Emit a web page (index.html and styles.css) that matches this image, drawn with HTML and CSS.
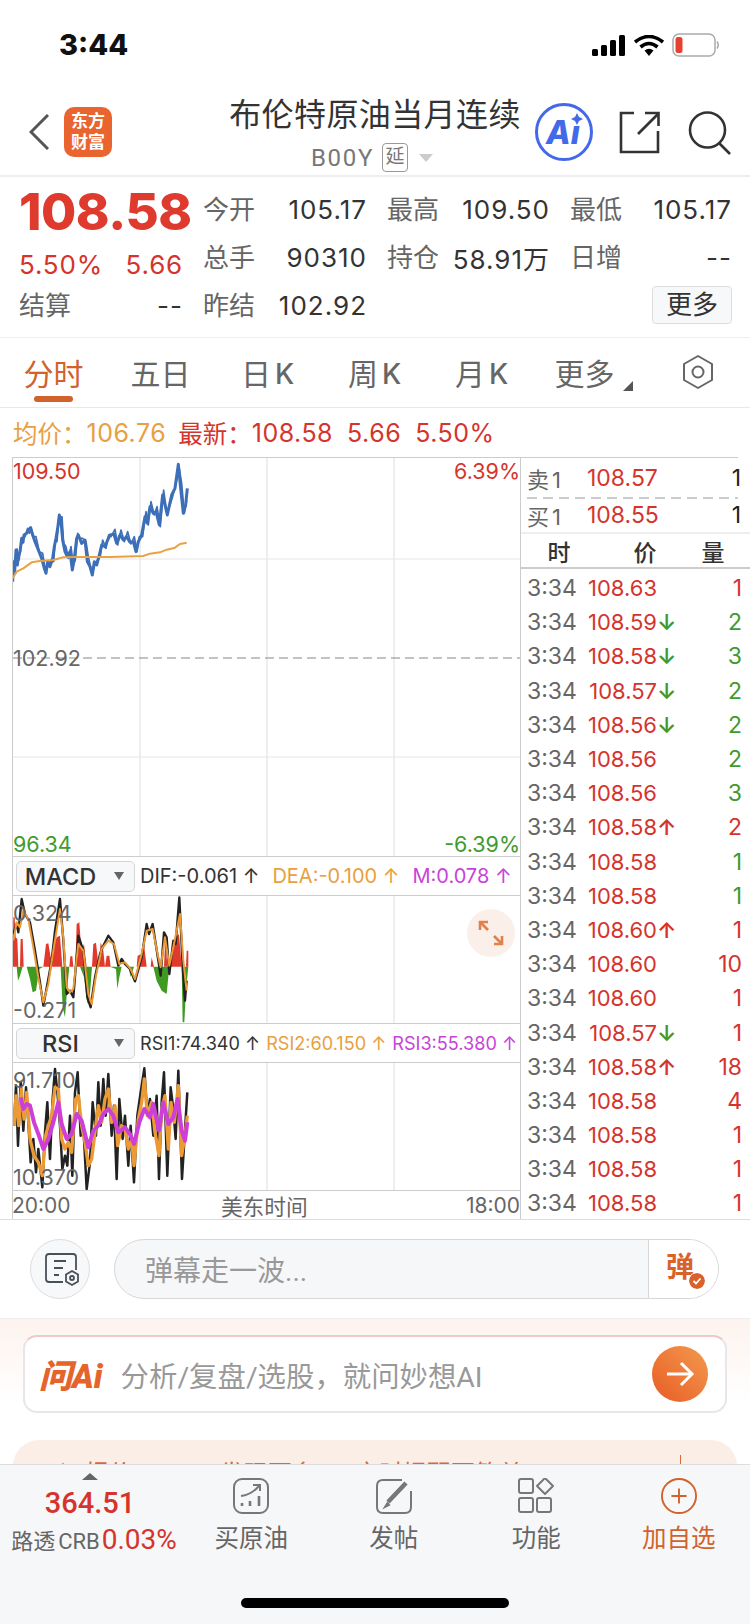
FILE: index.html
```html
<!DOCTYPE html>
<html lang="zh-CN">
<head>
    <meta charset="UTF-8">
    <meta name="viewport" content="width=device-width, initial-scale=1.0">
    <title>布伦特原油当月连续</title>
    <link rel="stylesheet" href="styles.css">
</head>
<body>
<div class="page">

    <!-- Status bar -->
    <div class="status-bar">
        <span class="clock">3:44</span>
        <div class="status-icons">
            <svg width="34" height="21" viewBox="0 0 34 21"><rect x="0" y="14" width="6" height="7" rx="1.5"/><rect x="9" y="10" width="6" height="11" rx="1.5"/><rect x="18" y="5" width="6" height="16" rx="1.5"/><rect x="27" y="0" width="6" height="21" rx="1.5"/></svg>
            <svg width="30" height="21" viewBox="0 0 30 21"><path d="M1 7 Q15 -4 29 7" fill="none" stroke="#000" stroke-width="3.6"/><path d="M6.5 12 Q15 5 23.5 12" fill="none" stroke="#000" stroke-width="3.6"/><path d="M10.5 15.5 Q15 12 19.5 15.5 L15 21 Z"/></svg>
            <svg width="48" height="24" viewBox="0 0 48 24"><rect x="1" y="1" width="42" height="22" rx="6" fill="none" stroke="#aaa" stroke-width="1.5"/><rect x="3.5" y="4" width="7" height="16" rx="2.5" fill="#e8402f"/><path d="M45 8.5 Q47.5 12 45 15.5" fill="none" stroke="#aaa" stroke-width="1.5"/></svg>
        </div>
    </div>

    <!-- Header -->
    <div class="header">
        <div class="header-left">
            <svg width="20" height="36" viewBox="0 0 20 36"><polyline points="19,1 2,18 19,35" fill="none" stroke="#555" stroke-width="3"/></svg>
            <div class="logo">东方<br>财富</div>
        </div>
        <div class="header-title">
            <div class="title">布伦特原油当月连续</div>
            <div class="subtitle">
                <span class="code">B00Y</span>
                <span class="delay-tag">延</span>
                <span class="caret-light"></span>
            </div>
        </div>
        <div class="header-right">
            <svg width="60" height="60" viewBox="0 0 60 60">
                <circle cx="30" cy="30" r="27.5" fill="none" stroke="#4169e8" stroke-width="3"/>
                <text x="12" y="42" class="ai-text">Ai</text>
                <circle cx="43" cy="17" r="7" fill="#fff"/>
                <path d="M43 11 L45 15 L49 17 L45 19 L43 23 L41 19 L37 17 L41 15 Z" fill="#4169e8"/>
            </svg>
            <svg width="42" height="44" viewBox="0 0 42 44" fill="none" stroke="#333" stroke-width="2.6"><path d="M15 3 H2 V42 H39 V21"/><path d="M19 24 L39 4"/><path d="M26 3 H39.5 V16"/></svg>
            <svg class="search-icon" width="44" height="46" viewBox="0 0 44 46" fill="none" stroke="#333" stroke-width="2.6"><circle cx="19.5" cy="21" r="17.5"/><path d="M31 34 L42 45"/></svg>
        </div>
    </div>

    <!-- Quote -->
    <div class="quote">
        <div class="quote-left">
            <div class="big-price">108.58</div>
            <div class="quote-change"><span>5.50%</span><span>5.66</span></div>
            <div class="quote-cell"><span class="label">结算</span><span class="val">--</span></div>
        </div>
        <div class="quote-grid">
            <div class="quote-cell"><span class="label">今开</span><span class="val red">105.17</span></div>
            <div class="quote-cell"><span class="label">最高</span><span class="val red">109.50</span></div>
            <div class="quote-cell"><span class="label">最低</span><span class="val red">105.17</span></div>
            <div class="quote-cell"><span class="label">总手</span><span class="val">90310</span></div>
            <div class="quote-cell"><span class="label">持仓</span><span class="val">58.91万</span></div>
            <div class="quote-cell"><span class="label">日增</span><span class="val">--</span></div>
            <div class="quote-cell"><span class="label">昨结</span><span class="val">102.92</span></div>
            <div></div>
            <div class="quote-more"><button class="more-btn">更多</button></div>
        </div>
    </div>

    <!-- Tabs -->
    <div class="tabs">
        <div class="tab active">分时</div>
        <div class="tab">五日</div>
        <div class="tab">日<em>K</em></div>
        <div class="tab">周<em>K</em></div>
        <div class="tab">月<em>K</em></div>
        <div class="tab tab-more">更多<i></i></div>
        <div class="tab tab-gear">
            <svg width="36" height="36" viewBox="0 0 36 36" fill="none" stroke="#666" stroke-width="2"><path d="M18 2 L32 10 V26 L18 34 L4 26 V10 Z" stroke-linejoin="round"/><circle cx="18" cy="18" r="5.5"/></svg>
        </div>
    </div>

    <!-- Average line -->
    <div class="avg-line">
        <span class="orange">均价：</span><span class="orange avg-val avg-num">106.76</span>
        <span class="red">最新：</span><span class="red avg-val">108.58</span>
        <span class="red avg-val avg-gap">5.66</span><span class="red avg-val avg-gap">5.50%</span>
    </div>

    <div class="chart-area">
        <div class="chart-col">

            <div class="pane pane-main">
                <svg width="507" height="400" viewBox="0 0 507 400">
                    <g class="grid-v"><line x1="127" y1="0" x2="127" y2="400"/><line x1="254" y1="0" x2="254" y2="400"/><line x1="381" y1="0" x2="381" y2="400"/></g>
                    <g class="grid-h"><line x1="0" y1="101" x2="507" y2="101"/><line x1="0" y1="299" x2="507" y2="299"/></g>
                    <line x1="0" y1="200" x2="507" y2="200" stroke="#888" stroke-width="1.2" stroke-dasharray="9 5"/>
                    <g transform="translate(-3,-3) scale(.3333)" fill="none" stroke-linejoin="round">
                        <polyline stroke="#3d6fb8" stroke-width="9" points="8,380 10,320 14,350 18,285 22,330 26,300 30,290 35,250 39,262 42,240 50,235 55,225 62,218 68,240 75,260 85,285 95,310 103,340 108,355 113,320 120,335 128,310 133,275 138,250 143,220 148,180 153,200 158,255 165,290 172,305 180,290 187,345 193,310 200,250 205,240 215,265 225,255 232,320 240,335 247,360 253,320 260,330 268,300 275,270 285,275 293,255 300,240 312,238 320,265 330,240 340,255 350,245 360,262 370,260 378,290 385,260 395,240 405,185 412,205 420,155 430,175 438,170 448,210 458,120 465,150 472,180 485,120 495,100 505,28 512,100 520,175 527,150 532,100"/>
                        <polyline stroke="#3d6fb8" stroke-width="5" transform="translate(3,-5)" points="18,285 24,320 30,280 35,255 42,250 50,225 55,240 62,230 68,250 75,250 85,295 95,300 103,350 108,345 113,335 120,320 128,325 133,260 138,265 143,205 148,200 153,190 158,270 165,280 172,315 180,280 187,335 193,320 200,240 205,255 215,255 225,265 232,310 240,345 247,350 253,330 260,320 268,310 275,260 285,285 293,245 300,250 312,228 320,275 330,230 340,265 350,235 360,272 370,250 378,295 385,250 395,250 405,175 412,215 420,145 430,185 438,160 448,220 458,110 465,160 472,170 485,130 495,90 505,45 512,90 520,180 527,140"/>
                        <polyline stroke="#e9a23f" stroke-width="6" points="8,370 20,350 40,340 65,322 90,318 130,315 160,307 200,306 300,306 400,303 420,296 450,292 470,284 495,278 510,267 530,263"/>
                    </g>
                </svg>
                <span class="axis red axis-tl">109.50</span>
                <span class="axis red axis-tr">6.39%</span>
                <span class="axis grey axis-ml">102.92</span>
                <span class="axis green axis-bl">96.34</span>
                <span class="axis green axis-br">-6.39%</span>
            </div>

            <div class="ind-row">
                <div class="ind-select">MACD<i></i></div>
                <div class="legend legend-macd">
                    <span class="dark">DIF:-0.061 ↑</span>
                    <span class="orange">DEA:-0.100 ↑</span>
                    <span class="purple">M:0.078 ↑</span>
                </div>
            </div>

            <div class="pane pane-sub">
                <svg width="507" height="127" viewBox="0 0 507 127">
                    <g class="grid-v"><line x1="127" y1="0" x2="127" y2="127"/><line x1="254" y1="0" x2="254" y2="127"/><line x1="381" y1="0" x2="381" y2="127"/></g>
                    <g transform="translate(-3,-2) scale(.3333)" stroke-linejoin="round">
                        <polygon fill="#e2392d" points="8,218 10,70 14,70 17,130 22,135 25,218 30,218 32,135 38,135 41,218 100,218 108,150 115,148 122,190 130,160 140,130 150,125 157,218 178,218 181,187 187,187 190,218 196,218 200,90 208,85 214,170 222,150 230,218 246,218 250,150 258,146 266,218 272,145 280,170 285,218 290,185 298,185 302,218 380,218 383,185 395,180 402,150 410,218 422,218 425,190 432,218 462,218 466,130 472,218 482,218 488,170 498,130 507,120 515,218 528,218 530,170 535,170 535,218"/>
                        <polygon fill="#3f9a22" points="20,218 24,260 30,245 38,218 50,218 60,255 68,295 78,290 88,225 100,218 152,218 158,340 165,370 172,280 178,218 210,218 222,250 232,330 240,300 246,218 300,218 318,225 322,285 328,250 335,218 355,218 362,248 372,218 430,218 440,260 455,290 470,300 478,218 515,218 518,385 523,385 528,290 535,218"/>
                        <polyline fill="none" stroke="#222" stroke-width="7" points="10,120 20,90 25,115 35,15 45,60 60,85 75,170 90,265 100,335 115,255 125,200 135,110 150,15 160,140 170,300 180,290 190,310 205,125 220,170 232,310 242,340 255,250 270,180 280,155 295,125 310,145 325,215 335,195 345,210 360,225 375,262 395,190 410,90 417,120 428,90 445,200 452,245 462,115 470,130 478,240 490,140 497,150 508,10 518,215 525,320 530,260"/>
                        <polyline fill="none" stroke="#ec9a35" stroke-width="6" points="10,140 20,85 30,100 40,50 55,75 70,160 85,250 100,325 115,270 130,170 150,45 160,130 170,280 180,295 190,285 205,150 220,170 235,300 245,330 258,245 275,165 295,140 312,150 328,210 345,205 362,225 375,255 395,180 410,110 428,105 445,190 452,220 465,130 478,215 492,150 510,60 520,200 530,290"/>
                    </g>
                </svg>
                <span class="axis grey axis-tl">0.324</span>
                <span class="axis grey axis-bl-sub">-0.271</span>
                <div class="expand-btn">
                    <svg width="28" height="28" viewBox="0 0 28 28" fill="none" stroke="#e2804a" stroke-width="2.6"><path d="M3 11 V3 H11"/><path d="M3 3 L11 11"/><path d="M25 17 V25 H17"/><path d="M25 25 L17 17"/></svg>
                </div>
            </div>

            <div class="ind-row">
                <div class="ind-select">RSI<i></i></div>
                <div class="legend legend-rsi">
                    <span class="dark">RSI1:74.340 ↑</span>
                    <span class="orange">RSI2:60.150 ↑</span>
                    <span class="purple">RSI3:55.380 ↑</span>
                </div>
            </div>

            <div class="pane pane-sub">
                <svg width="507" height="127" viewBox="0 0 507 127">
                    <g class="grid-v"><line x1="127" y1="0" x2="127" y2="127"/><line x1="254" y1="0" x2="254" y2="127"/><line x1="381" y1="0" x2="381" y2="127"/></g>
                    <g transform="translate(-3,-4) scale(.3333)" fill="none" stroke-linejoin="round">
                        <polyline stroke="#222" stroke-width="7.5" points="12,200 18,80 24,260 32,70 40,215 48,85 55,190 62,310 70,240 78,340 85,270 97,385 105,220 112,130 120,300 128,120 135,30 143,110 150,200 157,330 165,290 172,320 180,170 187,350 195,100 203,40 212,230 220,200 230,390 240,310 248,130 258,230 265,70 272,200 280,60 287,170 295,45 305,230 312,140 320,360 328,120 338,240 345,170 355,320 362,200 372,370 382,170 392,100 403,28 412,170 420,120 430,230 440,110 447,360 455,130 462,40 472,350 482,85 490,150 497,240 505,35 516,360 524,230 532,100"/>
                        <polyline stroke="#ec9a35" stroke-width="10" points="12,200 18,110 26,200 34,90 42,180 50,100 60,240 72,290 85,310 97,350 107,230 115,200 125,170 135,85 145,90 155,240 165,270 175,250 185,280 197,120 205,110 215,200 225,250 235,320 245,300 255,220 265,140 275,190 285,120 295,90 305,190 315,140 323,260 335,200 345,210 355,270 365,240 372,320 385,180 395,130 403,60 412,170 425,130 435,220 447,290 455,150 465,110 475,270 483,130 493,190 505,80 515,290 525,230 532,170"/>
                        <polyline stroke="#cc3fd8" stroke-width="12" points="32,115 40,150 50,135 60,140 72,190 85,225 100,270 115,240 130,190 145,130 155,195 170,240 185,225 200,165 215,185 235,265 250,215 265,200 280,165 295,150 310,170 325,220 345,205 360,225 372,255 388,190 403,150 420,175 430,135 447,215 460,130 475,195 490,175 503,120 515,215 525,245 532,190"/>
                    </g>
                </svg>
                <span class="axis grey axis-tl">91.710</span>
                <span class="axis grey axis-bl-sub">10.370</span>
            </div>

            <div class="time-row">
                <span>20:00</span><span class="time-zone">美东时间</span><span>18:00</span>
            </div>
        </div>

        <!-- Order book and ticks -->
        <div class="book">
            <div class="book-top">
                <div class="book-row book-sell"><span class="book-label">卖<em>1</em></span><span class="red">108.57</span><span class="book-qty">1</span></div>
                <div class="book-row book-buy"><span class="book-label">买<em>1</em></span><span class="red">108.55</span><span class="book-qty">1</span></div>
            </div>
            <div class="book-head"><span>时</span><span>价</span><span>量</span></div>
            <div class="ticks">
                <div class="tick"><span>3:34</span><span class="red">108.63</span><span></span><span class="red">1</span></div>
                <div class="tick"><span>3:34</span><span class="red">108.59</span><span class="green">↓</span><span class="green">2</span></div>
                <div class="tick"><span>3:34</span><span class="red">108.58</span><span class="green">↓</span><span class="green">3</span></div>
                <div class="tick"><span>3:34</span><span class="red">108.57</span><span class="green">↓</span><span class="green">2</span></div>
                <div class="tick"><span>3:34</span><span class="red">108.56</span><span class="green">↓</span><span class="green">2</span></div>
                <div class="tick"><span>3:34</span><span class="red">108.56</span><span></span><span class="green">2</span></div>
                <div class="tick"><span>3:34</span><span class="red">108.56</span><span></span><span class="green">3</span></div>
                <div class="tick"><span>3:34</span><span class="red">108.58</span><span class="red">↑</span><span class="red">2</span></div>
                <div class="tick"><span>3:34</span><span class="red">108.58</span><span></span><span class="green">1</span></div>
                <div class="tick"><span>3:34</span><span class="red">108.58</span><span></span><span class="green">1</span></div>
                <div class="tick"><span>3:34</span><span class="red">108.60</span><span class="red">↑</span><span class="red">1</span></div>
                <div class="tick"><span>3:34</span><span class="red">108.60</span><span></span><span class="red">10</span></div>
                <div class="tick"><span>3:34</span><span class="red">108.60</span><span></span><span class="red">1</span></div>
                <div class="tick"><span>3:34</span><span class="red">108.57</span><span class="green">↓</span><span class="red">1</span></div>
                <div class="tick"><span>3:34</span><span class="red">108.58</span><span class="red">↑</span><span class="red">18</span></div>
                <div class="tick"><span>3:34</span><span class="red">108.58</span><span></span><span class="red">4</span></div>
                <div class="tick"><span>3:34</span><span class="red">108.58</span><span></span><span class="red">1</span></div>
                <div class="tick"><span>3:34</span><span class="red">108.58</span><span></span><span class="red">1</span></div>
                <div class="tick"><span>3:34</span><span class="red">108.58</span><span></span><span class="red">1</span></div>
            </div>
        </div>
    </div>

    <!-- Danmu input -->
    <div class="danmu">
        <div class="danmu-btn">
            <svg width="36" height="36" viewBox="0 0 36 36" fill="none" stroke="#4a5058" stroke-width="1.8"><path d="M19 30 H5 Q2 30 2 27 V5 Q2 2 5 2 H29 Q32 2 32 5 V18"/><path d="M10 9 H22 M10 16 H19 M10 23 H15"/><path d="M28 19 L34 22.5 V29.5 L28 33 L22 29.5 V22.5 Z"/><circle cx="28" cy="26" r="2"/></svg>
        </div>
        <div class="danmu-input">
            <span class="danmu-text">弹幕走一波...</span>
            <span class="danmu-send">弹<svg class="danmu-check" width="16" height="16" viewBox="0 0 16 16"><circle cx="8" cy="8" r="8" fill="#d9622c"/><path d="M4.5 8 L7 10.5 L11.5 5.5" fill="none" stroke="#fff" stroke-width="1.8"/></svg></span>
        </div>
    </div>

    <div class="scroll">
        <div class="ask-box">
            <span class="ask-logo">问Ai</span>
            <span class="ask-text">分析/复盘/选股，就问妙想AI</span>
            <span class="ask-go">
                <svg width="30" height="28" viewBox="0 0 30 28" fill="none" stroke="#fff" stroke-width="3"><path d="M2 14 H27"/><path d="M16 3 L27 14 L16 25"/></svg>
            </span>
        </div>
        <div class="peek-card">
            <span class="peek-icon">▲</span>
            <span class="peek-a">报价</span>
            <span class="peek-b">发现更多</span>
            <span class="peek-c">实时提醒更简单</span>
            <span class="peek-line"></span>
        </div>
    </div>

    <!-- Bottom bar -->
    <div class="bottom-bar">
        <div class="index-box">
            <i class="index-caret"></i>
            <div class="index-price">364.51</div>
            <div class="index-line"><span class="index-name">路透<em>CRB</em></span><span class="index-pct">0.03%</span></div>
        </div>
        <div class="bar-item">
            <svg width="36" height="36" viewBox="0 0 36 36" fill="none" stroke="#777" stroke-width="2"><rect x="1" y="1" width="34" height="34" rx="8"/><path d="M8 18 Q18 17 26 8"/><path d="M20 7 H27 V13"/><path d="M9 25 V28 M17 23 V28 M26 18 V28" stroke-width="2.6"/></svg>
            <span>买原油</span>
        </div>
        <div class="bar-item">
            <svg width="36" height="36" viewBox="0 0 36 36" fill="none" stroke="#777" stroke-width="2"><path d="M26 2 H7 Q1 2 1 8 V29 Q1 35 7 35 H29 Q35 35 35 29 V13"/><path d="M12 24 L30 5" stroke-width="4.5"/><path d="M11.5 25 L9 29 L13 27 Z" fill="#777"/></svg>
            <span>发帖</span>
        </div>
        <div class="bar-item">
            <svg width="36" height="36" viewBox="0 0 36 36" fill="none" stroke="#777" stroke-width="2"><rect x="1" y="1" width="14" height="14" rx="2"/><rect x="1" y="20" width="14" height="14" rx="2"/><rect x="19" y="20" width="14" height="14" rx="2"/><path d="M27 0 L35 8 L27 16 L19 8 Z" stroke-linejoin="round"/></svg>
            <span>功能</span>
        </div>
        <div class="bar-item bar-add">
            <svg width="38" height="38" viewBox="0 0 38 38" fill="none" stroke="#d2622b" stroke-width="2"><circle cx="19" cy="19" r="18"/><path d="M11 19 H27 M19 11 V27"/></svg>
            <span>加自选</span>
        </div>
        <div class="home-indicator"></div>
    </div>
</div>
</body>
</html>
```

FILE: styles.css
```css
* {
    box-sizing: border-box;
}

body {
    margin: 0;
    font-family: Roboto, "Noto Sans CJK SC", sans-serif;
    background-color: white;
    color: #333;
}

em {
    font-style: normal;
}

.page {
    width: 750px;
    height: 1624px;
    display: flex;
    flex-direction: column;
    overflow: hidden;
}

.red { color: #d5342c; }
.green { color: #3f9a2e; }
.orange { color: #e9a03f; }
.purple { color: #c844d8; }
.grey { color: #666; }
.dark { color: #333; }

/* Status bar */
.status-bar {
    height: 88px;
    flex-shrink: 0;
    display: flex;
    align-items: flex-start;
    justify-content: space-between;
    padding: 31px 30px 0 59px;
}

.clock {
    font-family: Inter, sans-serif;
    font-size: 29px;
    font-weight: 800;
    line-height: 28px;
    color: #111;
}

.status-icons {
    height: 28px;
    display: flex;
    align-items: center;
    gap: 8px;
}

/* Header */
.header {
    height: 89px;
    flex-shrink: 0;
    display: flex;
    border-bottom: 2px solid #eee;
}

.header-left {
    width: 214px;
    display: flex;
    align-items: center;
    gap: 15px;
    padding-left: 29px;
}

.logo {
    width: 48px;
    height: 50px;
    border-radius: 10px;
    background-color: #ea6430;
    color: white;
    font-size: 17px;
    font-weight: 700;
    line-height: 21px;
    text-align: center;
    padding-top: 4px;
}

.header-title {
    width: 322px;
    display: flex;
    flex-direction: column;
    align-items: center;
    padding-top: 7px;
}

.title {
    font-size: 32px;
    line-height: 40px;
    letter-spacing: 0.4px;
    color: #333;
    white-space: nowrap;
}

.subtitle {
    display: flex;
    align-items: center;
    gap: 8px;
    margin-top: 8px;
    margin-right: 6px;
    height: 29px;
}

.code {
    font-size: 24px;
    letter-spacing: 1.7px;
    color: #777;
}

.delay-tag {
    width: 26px;
    height: 29px;
    border: 1px solid #999;
    border-radius: 4px;
    font-size: 19px;
    line-height: 26px;
    text-align: center;
    color: #777;
}

.caret-light {
    width: 0;
    height: 0;
    border-left: 7px solid transparent;
    border-right: 7px solid transparent;
    border-top: 8px solid #ccc;
    margin-left: 3px;
}

.header-right {
    width: 214px;
    margin-left: -2px;
    display: flex;
    align-items: center;
    gap: 25px;
}

.search-icon {
    margin-left: 2px;
}

.ai-text {
    font-family: Inter, sans-serif;
    font-size: 32px;
    font-weight: 800;
    font-style: italic;
    fill: #4169e8;
}

/* Quote */
.quote {
    height: 161px;
    flex-shrink: 0;
    display: flex;
    padding-left: 19px;
    border-bottom: 1px solid #eee;
}

.quote-left {
    width: 184px;
    padding-right: 20px;
    display: flex;
    flex-direction: column;
}

.big-price {
    height: 70px;
    font-family: Inter, sans-serif;
    font-size: 51px;
    font-weight: 800;
    line-height: 70px;
    letter-spacing: -0.5px;
    color: #df3a2e;
    white-space: nowrap;
}

.quote-change {
    height: 34px;
    display: flex;
    align-items: center;
    justify-content: space-between;
    font-family: Inter, sans-serif;
    font-size: 26px;
    letter-spacing: 0.8px;
    color: #d5342c;
}

.quote-left .quote-cell {
    height: 48px;
}

.quote-grid {
    display: grid;
    grid-template-columns: 164px 163px 162px;
    grid-auto-rows: 48px;
    column-gap: 20px;
    padding-top: 8px;
}

.quote-cell {
    display: flex;
    align-items: center;
    justify-content: space-between;
    white-space: nowrap;
}

.label {
    font-size: 26px;
    margin-bottom: 4px;
    color: #666;
}

.val {
    font-family: Inter, "Noto Sans CJK SC", sans-serif;
    font-size: 26px;
    letter-spacing: 1px;
    color: #333;
}

.quote-more {
    display: flex;
    align-items: center;
    justify-content: flex-end;
}

.more-btn {
    width: 80px;
    height: 38px;
    padding: 0;
    font-family: inherit;
    font-size: 26px;
    line-height: 34px;
    color: #333;
    background-color: #f7f8fa;
    border: 1px solid #ddd;
    border-radius: 4px;
}

/* Tabs */
.tabs {
    height: 70px;
    flex-shrink: 0;
    display: flex;
    border-bottom: 1px solid #e8e8e8;
}

.tab {
    position: relative;
    width: 107px;
    display: flex;
    align-items: center;
    justify-content: center;
    padding-bottom: 2px;
    font-size: 30px;
    color: #666;
}

.tab em {
    font-family: Inter, sans-serif;
    font-weight: 500;
    font-size: 28px;
    line-height: 30px;
    margin: 5px 0 0 4px;
}

.tab.active {
    color: #d2622b;
}

.tab.active::after {
    content: "";
    position: absolute;
    left: 34px;
    bottom: 5px;
    width: 39px;
    height: 6px;
    border-radius: 3px;
    background-color: #d2622b;
}

.tab-more {
    padding-right: 8px;
}

.tab-more i {
    position: absolute;
    right: 9px;
    top: 43px;
    width: 0;
    height: 0;
    border-left: 10px solid transparent;
    border-bottom: 10px solid #555;
}

.tab-gear {
    padding-left: 5px;
}

/* Average line */
.avg-line {
    height: 49px;
    flex-shrink: 0;
    display: flex;
    align-items: center;
    padding-left: 13px;
    font-family: Inter, "Noto Sans CJK SC", sans-serif;
    font-size: 24.5px;
    white-space: nowrap;
}

.avg-val {
    font-size: 25px;
    letter-spacing: 0.5px;
}

.avg-num {
    margin-right: 12px;
}

.avg-gap {
    margin-left: 14px;
}

/* Charts */
.chart-area {
    height: 762px;
    flex-shrink: 0;
    display: flex;
}

.chart-col {
    width: 508px;
    margin-left: 12px;
    border-top: 1px solid #ccc;
    border-left: 1px solid #ccc;
    font-family: Inter, "Noto Sans CJK SC", sans-serif;
}

.pane {
    position: relative;
    border-bottom: 1px solid #ccc;
    overflow: hidden;
}

.pane svg {
    display: block;
}

.pane-main {
    height: 399px;
}

.pane-sub {
    height: 128px;
}

.grid-v line {
    stroke: #eee;
    stroke-width: 2;
}

.grid-h line {
    stroke: #e6e6e6;
    stroke-width: 1;
}

.axis {
    position: absolute;
    font-size: 21.5px;
    line-height: 24px;
    white-space: nowrap;
}

.axis-tl { left: 0; top: 1px; }
.axis-tr { right: 0; top: 1px; }
.axis-ml { left: 0; top: 188px; }
.axis-bl { left: 0; bottom: 0; }
.axis-br { right: 0; bottom: 0; }
.axis-tl.grey { top: 5px; }
.axis-bl-sub { left: 0; bottom: 1px; }

.expand-btn {
    position: absolute;
    right: 5px;
    top: 13px;
    width: 48px;
    height: 48px;
    border-radius: 50%;
    background-color: #fbf0e9;
    display: flex;
    align-items: center;
    justify-content: center;
}

.ind-row {
    height: 39px;
    display: flex;
    align-items: center;
    border-bottom: 1px solid #ccc;
    padding-left: 3px;
}

.ind-select {
    position: relative;
    width: 119px;
    height: 31px;
    background-color: #f7f8fa;
    border: 1px solid #d5d5d5;
    border-radius: 5px;
    font-size: 23.5px;
    font-weight: 500;
    line-height: 29px;
    padding-right: 30px;
    text-align: center;
    color: #333;
}

.ind-select i {
    position: absolute;
    right: 10px;
    top: 10px;
    width: 0;
    height: 0;
    border-left: 5px solid transparent;
    border-right: 5px solid transparent;
    border-top: 8px solid #666;
}

.legend {
    display: flex;
    margin-left: 5px;
    white-space: nowrap;
}

.legend-macd {
    gap: 13px;
    font-size: 20px;
}

.legend-rsi {
    gap: 6px;
    font-size: 18.1px;
}

.time-row {
    height: 28px;
    margin-left: -1px;
    display: flex;
    align-items: center;
    justify-content: space-between;
    font-size: 21px;
    color: #666;
}

.time-zone {
    font-size: 21.7px;
    margin-right: 8px;
}

/* Order book */
.book {
    width: 230px;
    border-left: 1px solid #ccc;
    font-family: Inter, "Noto Sans CJK SC", sans-serif;
}

.book-top {
    height: 75px;
    margin-right: 12px;
    border-top: 1px solid #ccc;
    background-image: linear-gradient(to right, #ccc 10px, transparent 10px);
    background-size: 16px 2px;
    background-position: 6px 39px;
    background-repeat: repeat-x;
}

.book-row {
    display: grid;
    grid-template-columns: 60px 1fr auto;
    align-items: center;
    margin-right: -3px;
    padding-left: 6px;
    font-size: 23px;
}

.book-sell {
    height: 39px;
}

.book-buy {
    height: 35px;
}

.book-label {
    font-size: 22px;
    color: #666;
}

.book-label em {
    margin-left: 3px;
}

.book-qty {
    color: #222;
}

.book-head {
    height: 37px;
    display: grid;
    grid-template-columns: 76px 96px 40px;
    align-items: center;
    justify-items: center;
    font-size: 23px;
    font-weight: 500;
    color: #333;
    border-top: 2px solid #eee;
    border-bottom: 2px solid #ccc;
}

.ticks {
    display: flex;
    flex-direction: column;
    padding-top: 2px;
}

.tick {
    height: 34.2px;
    flex-shrink: 0;
    display: grid;
    grid-template-columns: 60px 70px 16px 1fr;
    align-items: center;
    padding: 0 8px 0 6px;
    font-size: 23px;
}

.tick span:first-child {
    color: #666;
}

.tick span:nth-child(2) {
    font-size: 22px;
    text-align: right;
}

.tick span:nth-child(3) {
    font-size: 22px;
    font-weight: 600;
}

.tick span:last-child {
    text-align: right;
}

/* Danmu input */
.danmu {
    height: 100px;
    flex-shrink: 0;
    display: flex;
    align-items: center;
    gap: 24px;
    padding-left: 30px;
    border-top: 1px solid #ddd;
    border-bottom: 1px solid #eee;
}

.danmu-btn {
    width: 60px;
    height: 60px;
    border: 1px solid #ddd;
    border-radius: 50%;
    background-color: #f7f8fa;
    display: flex;
    align-items: center;
    justify-content: center;
    padding: 2px 0 0 4px;
}

.danmu-input {
    width: 605px;
    height: 60px;
    display: flex;
    align-items: center;
    border: 1px solid #d8d8d8;
    border-radius: 30px;
    background-color: #f6f7f9;
}

.danmu-text {
    flex: 1;
    padding-left: 30px;
    font-size: 28px;
    color: #999;
}

.danmu-send {
    position: relative;
    width: 70px;
    height: 100%;
    border-left: 1px solid #d8d8d8;
    background-color: white;
    border-radius: 0 30px 30px 0;
    font-size: 28px;
    font-weight: 700;
    line-height: 56px;
    padding-left: 17px;
    color: #d9622c;
}

.danmu-check {
    position: absolute;
    left: 39px;
    top: 32px;
    border: 1px solid white;
    border-radius: 50%;
    box-sizing: content-box;
}

/* AI box and the card behind the bottom bar */
.scroll {
    flex: 1;
    min-height: 0;
    overflow: hidden;
    padding-top: 16px;
    background-image: linear-gradient(to bottom, #fdf3ee 0, white 85px);
}

.ask-box {
    height: 78px;
    margin: 0 23px;
    display: flex;
    align-items: center;
    padding: 0 17px 0 14px;
    background-color: white;
    border: 2px solid #e9e5ea;
    border-top-color: #f0c9c4;
    border-radius: 14px;
}

.ask-logo {
    font-size: 33px;
    font-weight: 900;
    font-style: italic;
    color: #e5642c;
    white-space: nowrap;
}

.ask-text {
    flex: 1;
    margin-left: 18px;
    font-size: 28.4px;
    color: #999;
    white-space: nowrap;
}

.ask-go {
    width: 56px;
    height: 56px;
    border-radius: 50%;
    background-image: linear-gradient(to top right, #e85c25, #f39a4e);
    display: flex;
    align-items: center;
    justify-content: center;
}

.peek-card {
    position: relative;
    height: 80px;
    margin: 27px 13px 0;
    border-radius: 26px 26px 0 0;
    background-color: #fbeee6;
    font-size: 24px;
    line-height: 30px;
    color: #d9683a;
    white-space: nowrap;
}

.peek-a,
.peek-b,
.peek-c,
.peek-icon,
.peek-line {
    position: absolute;
    top: 19px;
}

.peek-icon { left: 38px; }
.peek-a { left: 72px; }
.peek-b { left: 207px; }
.peek-c { left: 342px; }

.peek-line {
    left: 667px;
    top: 15px;
    width: 1px;
    height: 12px;
    background-color: #d9683a;
}

/* Bottom bar */
.bottom-bar {
    position: relative;
    height: 160px;
    flex-shrink: 0;
    display: flex;
    background-color: #f6f7f9;
    border-top: 1px solid #ddd;
}

.index-box {
    width: 180px;
    display: flex;
    flex-direction: column;
    align-items: center;
    padding-top: 8px;
}

.index-caret {
    width: 0;
    height: 0;
    border-left: 8px solid transparent;
    border-right: 8px solid transparent;
    border-bottom: 7px solid #666;
}

.index-price {
    height: 36px;
    margin-top: 5px;
    font-size: 29px;
    line-height: 36px;
    font-weight: 500;
    color: #d5342c;
}

.index-line {
    display: flex;
    align-items: center;
    height: 30px;
    margin-top: 3px;
    padding-left: 8px;
    white-space: nowrap;
}

.index-name {
    font-size: 22px;
    color: #666;
}

.index-name em {
    margin-left: 3px;
}

.index-pct {
    margin-left: 2px;
    font-size: 28px;
    color: #d5342c;
}

.bar-item {
    width: 142.5px;
    display: flex;
    flex-direction: column;
    align-items: center;
    padding-top: 13px;
    font-size: 24.5px;
    line-height: 30px;
    color: #666;
}

.bar-item svg {
    height: 36px;
    margin-bottom: 10px;
}

.bar-add {
    color: #d2622b;
}

.home-indicator {
    position: absolute;
    left: 241px;
    bottom: 16px;
    width: 268px;
    height: 10px;
    border-radius: 5px;
    background-color: #000;
}
```
